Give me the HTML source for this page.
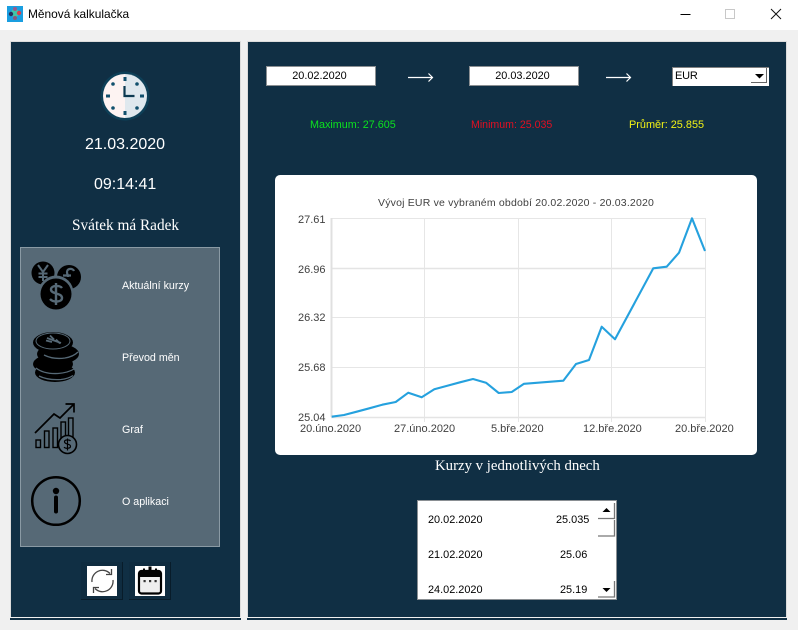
<!DOCTYPE html>
<html lang="cs"><head><meta charset="utf-8"><title>Měnová kalkulačka</title>
<style>
html,body{margin:0;padding:0}
body{width:798px;height:630px;background:#f0f0f0;position:relative;overflow:hidden;font-family:"Liberation Sans",sans-serif}
div{position:absolute;box-sizing:border-box}
.t{white-space:nowrap;line-height:1}
.sf{font-family:"Liberation Serif",serif}
.panel{background:#102f44;border-top:1px solid #dcdcdc;border-left:1px solid #dcdcdc;border-right:1px solid #dcdcdc}
.line{background:#102f44;height:2px;top:618px}
.inp{background:#fff;border:1px solid #8b8f92;color:#000;font-size:10.9px;text-align:center;line-height:19px;padding-right:3px}
.btn{background:#0f2c40;border-right:1px solid #081c2a;border-bottom:1px solid #081c2a}
.c{font-size:11px;color:#404040}
.l{font-size:10.7px;color:#fff}
.r{font-size:10.9px;color:#000}
svg{position:absolute;left:0;top:0}
</style></head><body>
<div style="left:0;top:0;width:798px;height:30px;background:#fff"></div>
<div class="t" style="left:28px;top:9px;font-size:11.9px;color:#000">Měnová kalkulačka</div>

<div class="panel" style="left:10px;top:41px;width:231px;height:576px"></div>
<div class="line" style="left:10px;width:231px"></div>
<div class="panel" style="left:247px;top:41px;width:540px;height:576px"></div>
<div class="line" style="left:247px;width:540px"></div>

<div class="t" style="left:85px;top:137px;font-size:16px;color:#fff">21.03.2020</div>
<div class="t" style="left:94px;top:177px;font-size:16px;color:#fff">09:14:41</div>
<div class="t sf" style="left:72px;top:218px;font-size:15.3px;color:#fff">Svátek má Radek</div>

<div style="left:20px;top:247px;width:200px;height:300px;background:#566976;border:1px solid #8a9aa4"></div>
<div class="t l" style="left:122px;top:281px">Aktuální kurzy</div>
<div class="t l" style="left:122px;top:353px">Převod měn</div>
<div class="t l" style="left:122px;top:425px">Graf</div>
<div class="t l" style="left:122px;top:497px">O aplikaci</div>

<div class="btn" style="left:81px;top:562px;width:42px;height:38px"></div>
<div style="left:87px;top:566px;width:30px;height:30px;background:#fff"></div>
<div class="btn" style="left:129px;top:562px;width:42px;height:38px"></div>
<div style="left:135px;top:566px;width:30px;height:30px;background:#fff"></div>

<div class="inp" style="left:266px;top:66px;width:110px;height:20px">20.02.2020</div>
<div class="inp" style="left:469px;top:66px;width:110px;height:20px">20.03.2020</div>
<div style="left:672px;top:67px;width:97px;height:19px;background:#fff;border-top:1px solid #808080;border-left:1px solid #808080"></div>
<div class="t" style="left:675px;top:71px;font-size:11px;color:#000;letter-spacing:-.2px">EUR</div>
<div style="left:751px;top:68px;width:16px;height:15px;background:#fff;border-right:1px solid #666;border-bottom:1px solid #666"></div>

<div class="t" style="left:310px;top:120px;font-size:10.8px;color:#0be21f">Maximum: 27.605</div>
<div class="t" style="left:471px;top:120px;font-size:10.6px;color:#e20f22">Minimum: 25.035</div>
<div class="t" style="left:629px;top:120px;font-size:10.9px;color:#f2f215">Průměr: 25.855</div>

<div style="left:275px;top:175px;width:482px;height:280px;background:#fff;border-radius:5px"></div>
<div class="t" style="left:378px;top:198px;font-size:10.5px;color:#404040;letter-spacing:.19px">Vývoj EUR ve vybraném období 20.02.2020 - 20.03.2020</div>
<div class="t c" style="left:298px;top:215px">27.61</div>
<div class="t c" style="left:298px;top:265px">26.96</div>
<div class="t c" style="left:298px;top:313px">26.32</div>
<div class="t c" style="left:298px;top:363px">25.68</div>
<div class="t c" style="left:298px;top:413px">25.04</div>
<div class="t c" style="left:300px;top:424px">20.úno.2020</div>
<div class="t c" style="left:394px;top:424px">27.úno.2020</div>
<div class="t c" style="left:491px;top:424px">5.bře.2020</div>
<div class="t c" style="left:583px;top:424px">12.bře.2020</div>
<div class="t c" style="left:675px;top:424px">20.bře.2020</div>

<div class="t sf" style="left:435px;top:459px;font-size:14.8px;color:#fff">Kurzy v jednotlivých dnech</div>

<div style="left:417px;top:500px;width:200px;height:100px;background:#fff;border:1px solid #8a8f93"></div>
<div class="t r" style="left:428px;top:515px">20.02.2020</div>
<div class="t r" style="left:556px;top:515px">25.035</div>
<div class="t r" style="left:428px;top:550px">21.02.2020</div>
<div class="t r" style="left:560px;top:550px">25.06</div>
<div class="t r" style="left:428px;top:585px">24.02.2020</div>
<div class="t r" style="left:560px;top:585px">25.19</div>

<svg width="798" height="630" viewBox="0 0 798 630" fill="none">
<!-- app icon -->
<rect x="7" y="6" width="16" height="16" fill="#1a9ee0"/>
<circle cx="15" cy="13" r="4" fill="#3fc6a8"/><circle cx="19" cy="13" r="2.2" fill="#d8404c"/><circle cx="11" cy="14" r="2.2" fill="#26305c"/><circle cx="15" cy="9" r="2" fill="#9a5a8a"/><circle cx="15" cy="18" r="2" fill="#8a5a7a"/>
<!-- window buttons -->
<path d="M680.5 14.5h10" stroke="#000"/>
<rect x="725.5" y="9.5" width="9" height="9" stroke="#c8c8c8" fill="#fff"/>
<path d="M771 9l10 10M781 9l-10 10" stroke="#111" stroke-width="1"/>
<!-- clock -->
<circle cx="125" cy="96" r="24.5" fill="#0d3f57"/>
<path d="M125 74a22 22 0 0 0 0 44z" fill="#fdf3f2"/><path d="M125 74a22 22 0 0 1 0 44z" fill="#dfe8ee"/>
<g fill="#11506d"><rect x="123.5" y="77" width="3" height="4"/><rect x="123.5" y="111" width="3" height="4"/><rect x="106" y="94.500" width="4" height="3"/><rect x="140" y="94.500" width="4" height="3"/>
<circle cx="113" cy="84" r="1.800"/><circle cx="137" cy="84" r="1.800"/><circle cx="113" cy="108" r="1.800"/><circle cx="137" cy="108" r="1.800"/></g>
<path d="M124.500 86v10h10" stroke="#0d3a52" stroke-width="2.200"/>
<!-- money -->
<g fill="#000"><circle cx="43" cy="273" r="11.500"/><circle cx="69" cy="277" r="12"/></g>
<circle cx="56" cy="293" r="17.500" fill="#566976"/><circle cx="56" cy="294" r="15.500" fill="#000"/>
<path d="M38 265l5 7 5-7M43 272v9M38.500 273.500h9M38.500 277h9" stroke="#566976" stroke-width="2"/>
<path d="M74 271c-1-3-7-3-7 1 0 2 1 3 1 5M63 275.500h8" stroke="#566976" stroke-width="2.200"/>
<path d="M62 288c-2-3-11-3-11 1.500 0 5 11 3 11 8.500 0 4.500-9 4.500-12 1M56 283v22" stroke="#566976" stroke-width="2.400"/>
<!-- coins -->
<ellipse cx="55" cy="372.500" rx="20" ry="9.500" fill="#000"/>
<ellipse cx="53" cy="364" rx="20" ry="9.500" fill="#000"/>
<ellipse cx="58" cy="354" rx="21" ry="10" fill="#000"/>
<ellipse cx="53" cy="342.500" rx="20" ry="10.500" fill="#000"/>
<path d="M36 368c5 4 12 6 22 5.500 7-.5 12-2 16-4.500M39 376c6 3 14 4 22 3.500 5-.5 9-2 12-4" stroke="#566976" stroke-width="1.300"/>
<path d="M44 355c6 3 14 4 21 3 6-1 10-3 13-6" stroke="#566976" stroke-width="1.300"/>
<ellipse cx="53" cy="341" rx="17" ry="8" stroke="#566976" stroke-width="1"/>
<path d="M47 338l14 5M50 335.500l4 4M56 339.500l4 4M46 340.500l6 1.500" stroke="#566976" stroke-width="1.800"/>
<!-- graph -->
<path d="M35 433l19-19 6 4 13.500-13.500M65.500 404h8.500v8.500" stroke="#000" stroke-width="1.700"/>
<g stroke="#000" stroke-width="1.400" fill="#566976"><rect x="36" y="440" width="4.500" height="7.500"/><rect x="44.500" y="431" width="4.500" height="16.500"/><rect x="53" y="428" width="4.500" height="19.500"/><rect x="61" y="422" width="4.500" height="25"/><rect x="68.500" y="418" width="4.500" height="22"/></g>
<circle cx="67.500" cy="444.500" r="9" fill="#566976" stroke="#000" stroke-width="1.600"/>
<path d="M70.500 441c-1-1.600-6-1.600-6 .8 0 3 6 1.500 6 4.500 0 2.500-5 2.500-6.500.8M67.500 438.500v12" stroke="#000" stroke-width="1.200"/>
<!-- info -->
<circle cx="56" cy="501" r="23.800" stroke="#000" stroke-width="2.500"/>
<circle cx="56" cy="491" r="3.200" fill="#000"/><path d="M56 497.500v14" stroke="#000" stroke-width="4" stroke-linecap="round"/>
<!-- refresh -->
<path d="M92 582A10.500 10.500 0 0 1 110 573.500M111.500 569v5.500h-5.500" stroke="#444" stroke-width="1.300"/>
<path d="M113 580A10.500 10.500 0 0 1 95 588.500M93.500 593v-5.500h5.500" stroke="#444" stroke-width="1.300"/>
<!-- calendar -->
<rect x="139" y="571" width="22" height="22.500" rx="2.500" stroke="#000" stroke-width="2.200" fill="#eee"/>
<path d="M139 571h22v6h-22z" fill="#000"/>
<rect x="148.500" y="566.500" width="3" height="3.500" fill="#000"/><rect x="143" y="568.500" width="2" height="2.500" fill="#000"/><rect x="155" y="568.500" width="2" height="2.500" fill="#000"/>
<g fill="#333"><rect x="143.500" y="580" width="2.200" height="2.200"/><rect x="149" y="580" width="2.200" height="2.200"/><rect x="154.500" y="580" width="2.200" height="2.200"/></g>
<!-- arrows -->
<path d="M408 77.500h24M428.500 73.500l4 4-4 4" stroke="#fff" stroke-width="1.200"/>
<path d="M606 77.500h24M626.500 73.500l4 4-4 4" stroke="#fff" stroke-width="1.200"/>
<path d="M755 74h9l-4.500 4.500z" fill="#000"/>
<!-- chart grid -->
<g stroke="#e6e6e6" stroke-width="1"><path d="M331 218.500h374M331 317.500h374M331 367.500h374"/><path d="M424.500 218v204M518.500 218v204M611.500 218v204M705.500 218v204"/></g>
<path d="M331 268.500h374M331 417.500h374" stroke="#e4e4e4" stroke-width="1.600"/>
<path d="M331.500 218v199" stroke="#e0e0e0" stroke-width="2"/>
<polyline stroke="#25a1de" stroke-width="2.100" stroke-linejoin="round" points="331.700,416.700 344,415 356.700,411.700 369.300,408.300 382.300,404.700 395.700,402 408.300,392.700 421.700,397.300 434.300,389.300 447.300,385.700 460,382.300 473,379 486,382.700 498.700,393 511.700,392 524,383.800 563.300,380.700 576,364 589,360 601.700,326.700 615,339.300 653.300,268.300 666.700,266.700 679,252.700 692,218.300 705,251"/>
<!-- list scrollbar -->
<path d="M598 518.500h16.500V503" stroke="#777" stroke-width="1.300"/>
<path d="M598 536h16.500V520" stroke="#777" stroke-width="1.300"/>
<path d="M598 597h16.500v-16" stroke="#777" stroke-width="1.300"/>
<path d="M602.500 512h8l-4-4z" fill="#000"/><path d="M602.500 588h8l-4 4z" fill="#000"/>
</svg>
</body></html>
